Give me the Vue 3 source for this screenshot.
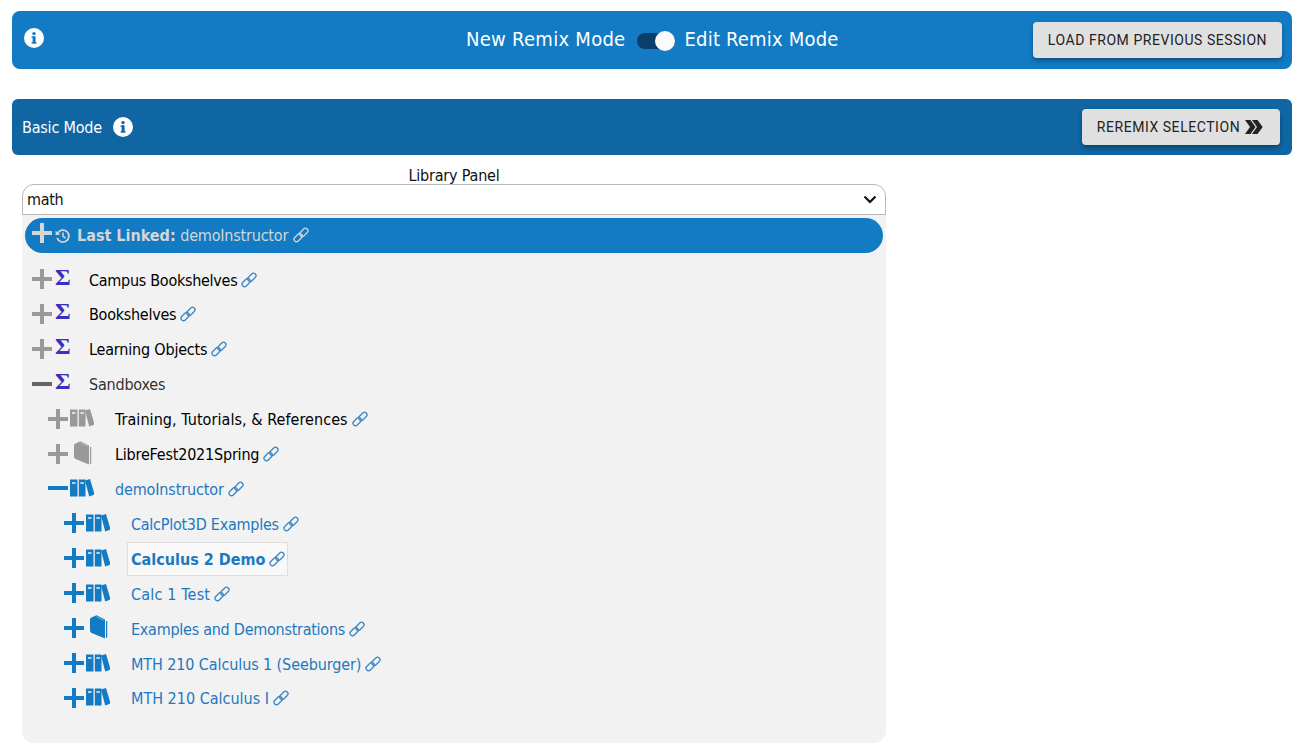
<script setup>
const rows = [
  { label: 'Campus Bookshelves', depth: 0, sign: 'plus', icon: 'sigma', tone: 'grey', labelClass: 'black', ls: -0.28 },
  { label: 'Bookshelves', depth: 0, sign: 'plus', icon: 'sigma', tone: 'grey', labelClass: 'black', ls: -0.27 },
  { label: 'Learning Objects', depth: 0, sign: 'plus', icon: 'sigma', tone: 'grey', labelClass: 'black', ls: -0.19 },
  { label: 'Sandboxes', depth: 0, sign: 'minus', icon: 'sigma', tone: 'dark', labelClass: 'dim', noLink: true, ls: -0.2 },
  { label: 'Training, Tutorials, & References', depth: 1, sign: 'plus', icon: 'books', tone: 'grey', labelClass: 'black', ls: 0.06 },
  { label: 'LibreFest2021Spring', depth: 1, sign: 'plus', icon: 'book', tone: 'grey', labelClass: 'black', ls: -0.2 },
  { label: 'demoInstructor', depth: 1, sign: 'minus', icon: 'books', tone: 'blue', labelClass: 'blue', ls: -0.14 },
  { label: 'CalcPlot3D Examples', depth: 2, sign: 'plus', icon: 'books', tone: 'blue', labelClass: 'blue', ls: -0.26 },
  { label: 'Calculus 2 Demo', depth: 2, sign: 'plus', icon: 'books', tone: 'blue', labelClass: 'blue', active: true, ls: 0 },
  { label: 'Calc 1 Test', depth: 2, sign: 'plus', icon: 'books', tone: 'blue', labelClass: 'blue', ls: 0.18 },
  { label: 'Examples and Demonstrations', depth: 2, sign: 'plus', icon: 'book', tone: 'blue', labelClass: 'blue', ls: -0.26 },
  { label: 'MTH 210 Calculus 1 (Seeburger)', depth: 2, sign: 'plus', icon: 'books', tone: 'blue', labelClass: 'blue', ls: -0.1 },
  { label: 'MTH 210 Calculus I', depth: 2, sign: 'plus', icon: 'books', tone: 'blue', labelClass: 'blue', ls: 0 },
]
</script>

<template>
  <div class="page">
    <header class="bar top">
      <svg class="info" viewBox="0 0 20 20"><circle cx="10" cy="10" r="10" fill="#fff"/><rect x="8.6" y="8.4" width="3" height="7" fill="#127bc4"/><rect x="7.6" y="8.4" width="3" height="1.4" fill="#127bc4"/><rect x="7.6" y="14.2" width="5" height="1.4" fill="#127bc4"/><circle cx="10" cy="5.6" r="1.7" fill="#127bc4"/></svg>
      <div class="mode">
        <span class="new">New Remix Mode</span>
        <span class="toggle"><span class="knob"></span></span>
        <span class="edit">Edit Remix Mode</span>
      </div>
      <button class="btn load">LOAD FROM PREVIOUS SESSION</button>
    </header>

    <section class="bar second">
      <span class="basic">Basic Mode</span>
      <svg class="info" viewBox="0 0 20 20"><circle cx="10" cy="10" r="10" fill="#fff"/><rect x="8.6" y="8.4" width="3" height="7" fill="#0f66a3"/><rect x="7.6" y="8.4" width="3" height="1.4" fill="#0f66a3"/><rect x="7.6" y="14.2" width="5" height="1.4" fill="#0f66a3"/><circle cx="10" cy="5.6" r="1.7" fill="#0f66a3"/></svg>
      <button class="btn remix">REREMIX SELECTION
        <svg class="chev" viewBox="0 0 18 14"><path d="M0 0h5.5l5 7-5 7H0l5-7zM7 0h5.5l5.2 7-5.2 7H7l5-7z" fill="#222"/></svg>
      </button>
    </section>

    <main class="library">
      <div class="panel-title">Library Panel</div>
      <div class="select">
        <span class="math">math</span>
        <svg class="caret" viewBox="0 0 14 9"><path d="M1.5 1.5 7 7l5.5-5.5" fill="none" stroke="#111" stroke-width="2.2"/></svg>
      </div>
      <div class="tree">
        <div class="last">
          <svg class="sign-svg" viewBox="0 0 20 20"><path d="M10 0v20M0 10h20" stroke="#d6d6d6" stroke-width="4"/></svg>
          <svg class="hist" viewBox="0 0 16 16"><path d="M2.6 5.2A6 6 0 1 1 2.2 10" fill="none" stroke="#d6d6d6" stroke-width="1.8"/><path d="M0.6 2.8 5.4 6.6 0.6 7.2z" fill="#d6d6d6"/><path d="M8 4.6V8.4l2.6 1.6" fill="none" stroke="#d6d6d6" stroke-width="1.6"/></svg>
          <span class="last-text"><b>Last Linked:</b> <span class="last-name">demoInstructor</span></span>
          <svg class="link light" viewBox="0 0 16 16"><rect x="6" y="3" width="9.5" height="5" rx="2.5" transform="rotate(-45 10.7 5.3)"/><rect x="0.5" y="8" width="9.5" height="5" rx="2.5" transform="rotate(-45 5.3 10.7)"/></svg>
        </div>

        <div class="rows">
          <div v-for="r in rows" :key="r.label" class="row" :class="['d' + r.depth, r.tone]">
            <svg class="sign-svg" viewBox="0 0 20 20">
              <path :d="r.sign === 'plus' ? 'M10 0v20M0 10h20' : 'M0 10h20'" class="sign-line"/>
            </svg>
            <span v-if="r.icon === 'sigma'" class="sigma">Σ</span>
            <svg v-else-if="r.icon === 'books'" class="books" viewBox="0 0 24 18">
              <g class="fill">
                <path d="M0 0.5h7.5v17h-7.5z"/><path d="M8.8 0.5h6.7v17h-6.7z"/><path d="M15 1.6 20 0l4.6 15.6-5.4 1.9z"/>
              </g>
              <path d="M2 3.2h3.5v1.6h-3.5zM10.4 3.2h3.4v1.6h-3.4z" fill="#f2f2f2"/>
            </svg>
            <svg v-else class="book" viewBox="0 0 18 24">
              <path d="M0 4.5Q0 3 1.5 2.4L6.5.2 15 4.4V23.6L1.6 18Q0 17.3 0 15.6z" class="fill"/>
              <path d="M16.6 6V22.8" fill="none" class="edge" stroke-width="1.2"/>
              <path d="M6.5 1.6 13.8 5.2" fill="none" stroke="#f2f2f2" stroke-opacity=".45" stroke-width=".9"/>
            </svg>
            <span class="label-box" :class="{ active: r.active }">
              <span class="label" :class="r.labelClass" :style="{ letterSpacing: r.ls + 'px' }">{{ r.label }}</span>
              <svg v-if="!r.noLink" class="link" viewBox="0 0 16 16"><rect x="6" y="3" width="9.5" height="5" rx="2.5" transform="rotate(-45 10.7 5.3)"/><rect x="0.5" y="8" width="9.5" height="5" rx="2.5" transform="rotate(-45 5.3 10.7)"/></svg>
            </span>
          </div>
        </div>
      </div>
    </main>
  </div>
</template>

<style scoped>
.page { width: 1303px; height: 756px; overflow: hidden; background: #fff; font-family: "DejaVu Sans Condensed", "DejaVu Sans", sans-serif; font-stretch: condensed; padding: 11px 11px 0 12px; box-sizing: border-box; }
.bar { display: flex; align-items: center; color: #fff; border-radius: 8px; position: relative; }
.top { height: 58px; background: #127bc4; padding: 0 10px 0 12px; }
.top .info { margin-top: -4px; }
.second { height: 56px; margin-top: 30px; background: #0f66a3; padding: 0 12px 0 10px; border-radius: 6px; }
.info { width: 20px; height: 20px; flex: none; }
.mode { position: absolute; left: 454px; top: -1px; height: 58px; display: flex; align-items: center; font-size: 20px; }
.new { letter-spacing: .28px; }
.edit { letter-spacing: .2px; }
.toggle { width: 38px; height: 16px; border-radius: 8px; background: #0a3f69; position: relative; display: block; margin: 3px 9px 0 12px; }
.knob { position: absolute; right: 0; top: -2px; width: 20px; height: 20px; border-radius: 50%; background: #fafafa; }
.btn { margin-left: auto; border: 0; background: #e0e0e0; color: #222; border-radius: 4px; font-family: Roboto, sans-serif; font-weight: 400; font-stretch: normal; font-size: 14px; letter-spacing: 0.55px; height: 36px; display: flex; align-items: center; justify-content: center; box-shadow: 0 2px 4px -1px rgba(0,0,0,.3), 0 4px 5px rgba(0,0,0,.14); }
.load { width: 249px; }
.remix { width: 198px; gap: 5px; padding-right: 8px; }
.chev { width: 18px; height: 14px; }
.basic { font-size: 16px; margin-right: 11px; letter-spacing: -.2px; }
.library { width: 864px; margin: 11px 0 0 10px; }
.panel-title { text-align: center; font-size: 16px; line-height: 20px; height: 18px; color: #111; letter-spacing: -.2px; }
.select { height: 31px; box-sizing: border-box; border: 1px solid #b8b8b8; border-radius: 12px 12px 0 0; display: flex; align-items: center; justify-content: space-between; padding: 0 8px 0 4px; font-size: 16px; color: #111; background: #fff; }
.math { letter-spacing: -.3px; }
.caret { width: 14px; height: 9px; }
.tree { height: 528px; background: #f2f2f2; border-radius: 0 0 12px 12px; padding: 3px 3px 0; box-sizing: border-box; }
.last { height: 35px; border-radius: 18px; background: #127bc4; display: flex; align-items: center; padding-left: 7px; color: #d6d6d6; font-size: 16px; }
.last .sign-svg { margin-top: -5px; }
.last .hist { width: 16px; height: 16px; margin: 0 6px 0 3px; }
.last-text { margin-top: -1px; }
.last-name { letter-spacing: -.2px; }
.last .link { margin-left: 5px; margin-top: -1px; }
.rows { margin-top: 8.6px; }
.row { height: 34.92px; display: flex; align-items: center; position: relative; }
.d0 { padding-left: 7px; }
.d1 { padding-left: 23px; }
.d2 { padding-left: 39px; }
.sign-svg { width: 20px; height: 20px; flex: none; }
.sign-line { stroke-width: 4; fill: none; }
.grey .sign-line { stroke: #999; }
.dark .sign-line { stroke: #666; }
.blue .sign-line { stroke: #127bc4; }
.grey .fill { fill: #999; }
.blue .fill { fill: #127bc4; }
.grey .edge { stroke: #999; }
.blue .edge { stroke: #127bc4; }
.sigma { width: 16px; margin: -5px 0 0 3px; font-family: "Liberation Serif", serif; font-weight: 700; font-size: 24px; color: #3a30c0; line-height: 20px; }
.books { width: 24px; height: 18px; margin: -1px 0 0 2px; flex: none; }
.book { width: 18px; height: 24px; margin: -2px 2px 0 6px; flex: none; }
.label-box { display: flex; align-items: center; height: 34px; box-sizing: border-box; margin-top: 1px; }
.d0 .label-box { margin-left: 18px; }
.d1 .label-box { margin-left: 21px; }
.d2 .label-box { margin-left: 17px; padding: 0 3px; border: 1px solid transparent; }
.d2 .label-box.active { background: #f8f8f8; border-color: #dedede; font-weight: 700; padding-right: 2px; }
.label { font-size: 16px; white-space: nowrap; padding-top: 1px; }
.label.black { color: #000; }
.label.dim { color: #333; }
.label.blue { color: #1d78c0; }
.link { width: 16px; height: 16px; margin-left: 4px; flex: none; fill: none; stroke: #3a86c4; stroke-width: 1.3; }
.link.light { stroke: #d6d6d6; }
</style>

<style>
html, body { margin: 0; background: #fff; }
</style>
